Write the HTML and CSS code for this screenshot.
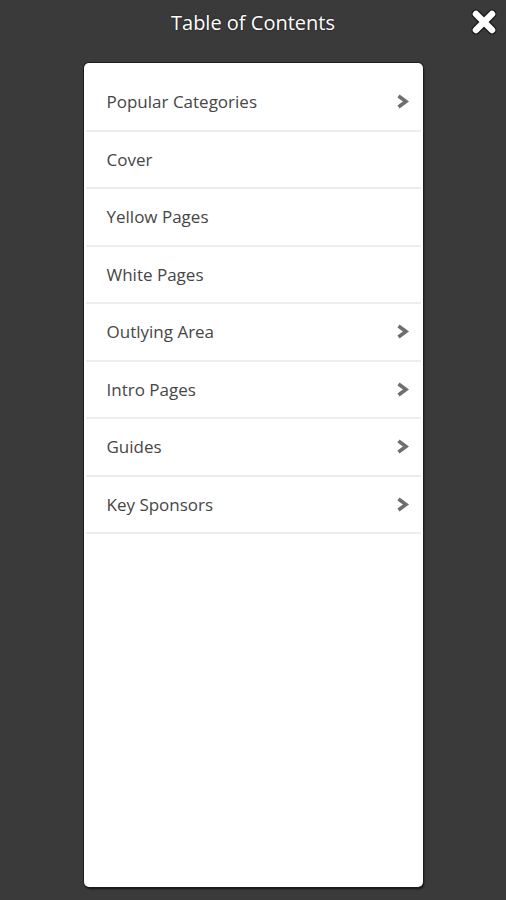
FILE: index.html
```html
<!DOCTYPE html>
<html lang="en">
<head>
<meta charset="utf-8">
<title>Table of Contents</title>
<link rel="stylesheet" href="styles.css">
</head>
<body>
<div class="screen">
  <header class="topbar">
    <h1 class="title">Table of Contents</h1>
    <button class="close" aria-label="Close">
      <svg width="28" height="28" viewBox="0 0 28 28">
        <path d="M6 6 L22 22 M22 6 L6 22" stroke="#1a1a1a" stroke-width="9" stroke-linecap="round" fill="none"/>
        <path d="M6 6 L22 22 M22 6 L6 22" stroke="#ffffff" stroke-width="6.5" stroke-linecap="round" fill="none"/>
      </svg>
    </button>
  </header>
  <main class="card">
    <ul class="toc">
      <li class="item"><span>Popular Categories</span><svg class="chev" viewBox="0 0 13 15" width="13" height="15"><path d="M2.5 2 L10 7.5 L2.5 13" stroke="#6e6e6e" stroke-width="3.6" fill="none"/></svg></li>
      <li class="item"><span>Cover</span></li>
      <li class="item"><span>Yellow Pages</span></li>
      <li class="item"><span>White Pages</span></li>
      <li class="item"><span>Outlying Area</span><svg class="chev" viewBox="0 0 13 15" width="13" height="15"><path d="M2.5 2 L10 7.5 L2.5 13" stroke="#6e6e6e" stroke-width="3.6" fill="none"/></svg></li>
      <li class="item"><span>Intro Pages</span><svg class="chev" viewBox="0 0 13 15" width="13" height="15"><path d="M2.5 2 L10 7.5 L2.5 13" stroke="#6e6e6e" stroke-width="3.6" fill="none"/></svg></li>
      <li class="item"><span>Guides</span><svg class="chev" viewBox="0 0 13 15" width="13" height="15"><path d="M2.5 2 L10 7.5 L2.5 13" stroke="#6e6e6e" stroke-width="3.6" fill="none"/></svg></li>
      <li class="item"><span>Key Sponsors</span><svg class="chev" viewBox="0 0 13 15" width="13" height="15"><path d="M2.5 2 L10 7.5 L2.5 13" stroke="#6e6e6e" stroke-width="3.6" fill="none"/></svg></li>
    </ul>
  </main>
</div>
</body>
</html>
```

FILE: styles.css
```css
html, body {
  margin: 0;
  padding: 0;
  height: 100%;
  background: #3a3a3a;
}
body {
  font-family: "Open Sans", "Liberation Sans", sans-serif;
}
.screen {
  height: 900px;
  display: flex;
  flex-direction: column;
  align-items: center;
  box-sizing: border-box;
  padding-bottom: 13px;
}
.topbar {
  position: relative;
  width: 100%;
  height: 63px;
  display: flex;
  justify-content: center;
}
.title {
  margin: 0;
  padding-top: 9px;
  font-size: 20px;
  font-weight: 400;
  line-height: 28px;
  color: #ffffff;
  text-shadow: 0 0 2px rgba(0,0,0,0.6);
}
.close {
  position: absolute;
  right: 8px;
  top: 8px;
  width: 28px;
  height: 28px;
  padding: 0;
  border: 0;
  background: transparent;
}
.close svg { display: block; }
.card {
  width: 339px;
  flex: 1;
  box-sizing: border-box;
  background: #ffffff;
  border-radius: 5px;
  box-shadow: 0 0 0 1px #1c1c1c, 1px 2px 2px rgba(0,0,0,0.7);
  padding: 11px 2px 0 2px;
}
.toc {
  list-style: none;
  margin: 0;
  padding: 0;
}
.item {
  height: 57.5px;
  box-sizing: border-box;
  border-bottom: 2px solid #ededed;
  display: flex;
  align-items: center;
  justify-content: space-between;
  padding: 0 12px 0 21px;
  font-size: 17px;
  color: #464646;
}
.chev { display: block; }
```
